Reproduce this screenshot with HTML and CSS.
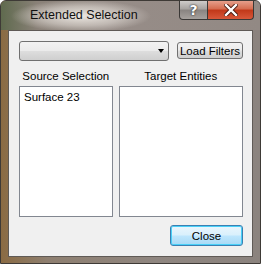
FILE: index.html
```html
<!DOCTYPE html>
<html lang="en">
<head>
    <meta charset="UTF-8">
    <title>Extended Selection</title>
    <link rel="stylesheet" href="styles.css">
</head>
<body>
    <div class="window">
        <div class="titlebar">
            <div class="title">Extended Selection</div>
            <div class="caption-buttons">
                <div class="cap-btn help">?</div>
                <div class="cap-btn close">
                    <svg width="14" height="12" viewBox="0 0 14 12">
                        <path d="M2 1 L12 11 M12 1 L2 11" stroke="#4a1a10" stroke-width="4.2" stroke-linecap="square"/>
                        <path d="M2 1 L12 11 M12 1 L2 11" stroke="#ffffff" stroke-width="2.4" stroke-linecap="square"/>
                    </svg>
                </div>
            </div>
        </div>
        <div class="client">
            <div class="filter-row">
                <div class="combo">
                    <span class="arrow"></span>
                </div>
                <button class="btn">Load Filters</button>
            </div>
            <div class="lists">
                <div class="list-col left">
                    <div class="list-label">Source Selection</div>
                    <div class="listbox">
                        <div class="item">Surface 23</div>
                    </div>
                </div>
                <div class="list-col right">
                    <div class="list-label">Target Entities</div>
                    <div class="listbox"></div>
                </div>
            </div>
            <div class="footer">
                <button class="btn default">Close</button>
            </div>
        </div>
    </div>
</body>
</html>
```

FILE: styles.css
```css
body {
    margin: 0;
    padding: 0;
    font-family: "Liberation Sans", Arial, sans-serif;
    font-size: 11.5px;
    color: #000;
}
.window {
    width: 261px;
    height: 264px;
    box-sizing: border-box;
    border: 1px solid #3e3a36;
    border-radius: 6px 6px 0 0;
    background: linear-gradient(90deg, #8a6b43 0%, #8e7f70 18%, #8f8680 60%, #8b837e 100%);
    display: flex;
    flex-direction: column;
    overflow: hidden;
}
.titlebar {
    height: 29px;
    display: flex;
    justify-content: space-between;
    background: radial-gradient(ellipse 70px 16px at 80px 15px, rgba(240, 236, 230, 0.95) 0%, rgba(220, 214, 208, 0.6) 60%, rgba(200, 190, 185, 0) 100%),
                linear-gradient(90deg, #5f6a4e 0%, #8a8178 14%, #978d88 40%, #928984 100%);
}
.title {
    padding: 7px 0 0 29px;
    font-size: 12.5px;
    color: #101010;
    white-space: nowrap;
}
.caption-buttons {
    display: flex;
    align-self: flex-start;
    margin-right: 6px;
    margin-top: -1px;
}
.cap-btn {
    height: 20px;
    display: flex;
    justify-content: center;
    align-items: center;
    box-sizing: border-box;
    border: 1px solid #3a3836;
    border-top: none;
}
.help {
    width: 29px;
    border-radius: 0 0 0 4px;
    background: linear-gradient(#d4d1cf 0%, #a9a5a2 45%, #8a8582 55%, #a6a19d 100%);
    color: #fff;
    font-family: "DejaVu Sans", sans-serif;
    font-weight: bold;
    font-size: 14px;
    text-shadow: 0 0 2px #333, 0 0 1px #222;
}
.close {
    width: 46px;
    border-left: none;
    border-radius: 0 0 4px 0;
    background: linear-gradient(#e8a592 0%, #d56e52 45%, #c2391a 55%, #d8583a 100%);
}
.client {
    margin: 0 7px 6px 7px;
    flex: 1;
    background-color: #f0f0f0;
    border: 1px solid #5f5a56;
    padding: 10px 9px 0 10px;
    display: flex;
    flex-direction: column;
}
.filter-row {
    display: flex;
    align-items: flex-start;
    gap: 8px;
}
.combo {
    width: 150px;
    height: 20px;
    box-sizing: border-box;
    border: 1px solid #707070;
    border-radius: 3px;
    background: linear-gradient(#f2f2f2 0%, #ebebeb 48%, #dddddd 52%, #cfcfcf 100%);
    position: relative;
}
.arrow {
    position: absolute;
    right: 4px;
    top: 7px;
    border-left: 3.5px solid transparent;
    border-right: 3.5px solid transparent;
    border-top: 4px solid #000;
}
.btn {
    font-family: "Liberation Sans", Arial, sans-serif;
    font-size: 11.5px;
    color: #000;
    padding: 0;
    white-space: nowrap;
    border: 1px solid #707070;
    border-radius: 3px;
    background: linear-gradient(#f2f2f2 0%, #ebebeb 48%, #dddddd 52%, #cfcfcf 100%);
}
.filter-row .btn {
    margin-top: 1px;
    width: 66px;
    height: 17px;
    line-height: 14px;
}
.lists {
    display: flex;
    gap: 6px;
    margin-top: 7px;
}
.list-col {
    display: flex;
    flex-direction: column;
}
.list-col.left {
    width: 94px;
}
.list-col.right {
    width: 125px;
}
.list-label {
    text-align: center;
    white-space: nowrap;
    height: 18px;
    line-height: 16px;
}
.listbox {
    height: 131px;
    box-sizing: border-box;
    border: 1px solid #828790;
    background-color: #fff;
    padding: 2px 4px;
}
.item {
    line-height: 16px;
}
.footer {
    display: flex;
    justify-content: flex-end;
    margin-top: 8px;
}
.btn.default {
    width: 73px;
    height: 21px;
    border: 1px solid #3c7fb1;
    box-shadow: inset 0 0 0 1px #48d0f8;
    background: linear-gradient(#eaf6fd 0%, #d9f0fc 48%, #bee6fd 52%, #a7d9f5 100%);
}
```
